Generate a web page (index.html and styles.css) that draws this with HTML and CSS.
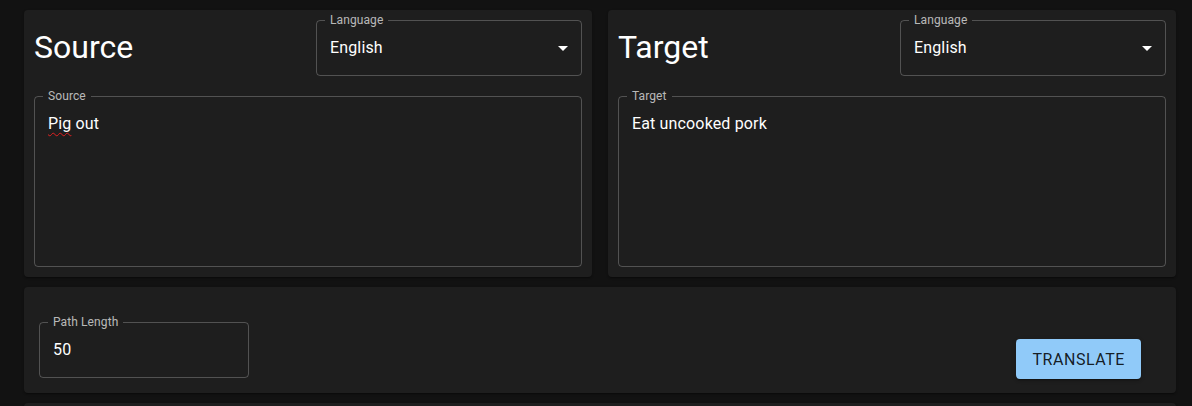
FILE: index.html
```html
<!DOCTYPE html>
<html lang="en">
<head>
<meta charset="utf-8">
<title>Translate</title>
<link rel="stylesheet" href="styles.css">
</head>
<body>
<main class="page">
  <div class="row">
    <section class="card panel">
      <div class="panel-head">
        <h4 class="title">Source</h4>
        <div class="field select">
          <span class="label">Language</span>
          <span class="value">English</span>
          <svg class="arrow" viewBox="0 0 24 24" width="24" height="24"><path d="M7 10l5 5 5-5z" fill="#fff"/></svg>
        </div>
      </div>
      <div class="field area">
        <span class="label">Source</span>
        <div class="value"><span class="misspelt">Pig</span> out</div>
      </div>
    </section>
    <section class="card panel">
      <div class="panel-head">
        <h4 class="title">Target</h4>
        <div class="field select">
          <span class="label">Language</span>
          <span class="value">English</span>
          <svg class="arrow" viewBox="0 0 24 24" width="24" height="24"><path d="M7 10l5 5 5-5z" fill="#fff"/></svg>
        </div>
      </div>
      <div class="field area">
        <span class="label">Target</span>
        <div class="value">Eat uncooked pork</div>
      </div>
    </section>
  </div>
  <section class="card controls">
    <div class="field number">
      <span class="label">Path Length</span>
      <span class="value">50</span>
    </div>
    <button class="btn" type="button">Translate</button>
  </section>
  <section class="card more"></section>
</main>
</body>
</html>
```
FILE: styles.css
```css
* { box-sizing: border-box; }
html, body { margin: 0; padding: 0; }
body {
  background: #121212;
  color: #fff;
  font-family: Roboto, "Liberation Sans", sans-serif;
  overflow: hidden;
  height: 406px;
}
.page {
  width: 1152px;
  margin: 10px 0 0 24px;
  display: flex;
  flex-direction: column;
  gap: 10px;
}
.row {
  display: flex;
  gap: 16px;
}
.card {
  background: #1e1e1e;
  border-radius: 4px;
  box-shadow: 0 2px 1px -1px rgba(0,0,0,.2), 0 1px 1px 0 rgba(0,0,0,.14), 0 1px 3px 0 rgba(0,0,0,.12);
}
.panel {
  flex: 1;
  height: 267px;
  padding: 10px;
  display: flex;
  flex-direction: column;
  gap: 20px;
}
.panel-head {
  display: flex;
  align-items: center;
  justify-content: space-between;
}
.title {
  margin: 0;
  font-size: 32px;
  font-weight: 400;
  line-height: 1.235;
}
.field {
  position: relative;
  border: 1px solid rgba(255,255,255,0.23);
  border-radius: 4px;
  padding: 15px 13px;
  font-size: 16px;
  line-height: 23px;
}
.label {
  position: absolute;
  top: -8px;
  left: 8px;
  padding: 0 5px;
  background: #1e1e1e;
  color: rgba(255,255,255,0.7);
  font-size: 12px;
  line-height: 14px;
  letter-spacing: 0.1px;
}
.value { display: block; letter-spacing: 0.15px; }
.select {
  width: 266px;
  height: 56px;
}
.arrow {
  position: absolute;
  right: 6px;
  top: 15px;
}
.area {
  height: 171px;
}
.misspelt {
  text-decoration: underline wavy #e02020;
  text-decoration-thickness: 1px;
  text-underline-offset: 3px;
}
.controls {
  height: 106px;
  padding: 35px 35px 15px 15px;
  display: flex;
  justify-content: space-between;
  align-items: flex-end;
}
.number {
  width: 210px;
  height: 56px;
}
.btn {
  height: 40px;
  padding: 0 16px;
  margin-bottom: -1px;
  border: 0;
  border-radius: 4px;
  background: #90caf9;
  color: rgba(0,0,0,0.87);
  font-family: Roboto, "Liberation Sans", sans-serif;
  font-size: 16px;
  font-weight: 400;
  letter-spacing: 0.55px;
  text-transform: uppercase;
  box-shadow: 0 3px 1px -2px rgba(0,0,0,.2), 0 2px 2px 0 rgba(0,0,0,.14), 0 1px 5px 0 rgba(0,0,0,.12);
}
.more {
  height: 200px;
}
```
